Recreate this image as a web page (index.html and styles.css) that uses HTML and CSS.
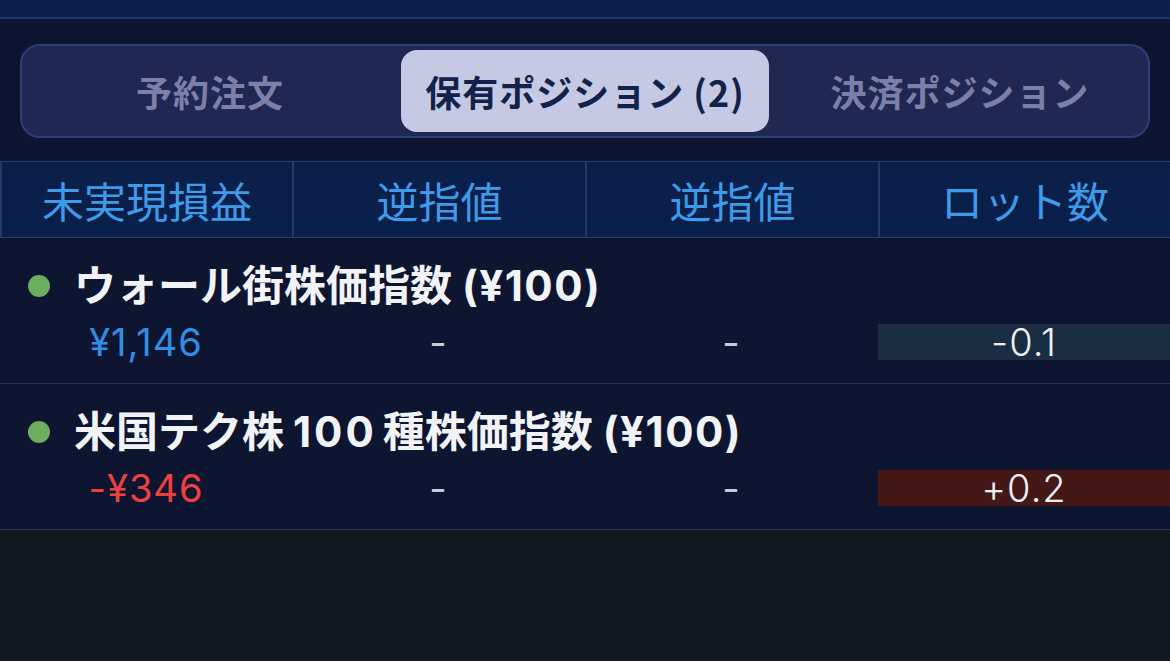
FILE: index.html
```html
<!DOCTYPE html>
<html lang="ja">
<head>
  <meta charset="utf-8">
  <title>保有ポジション</title>
  <link rel="stylesheet" href="styles.css">
</head>
<body>
  <div id="app">
    <div class="topbar"></div>

    <div class="panel">
      <div class="segment">
        <div class="tab">予約注文</div>
        <div class="tab active">保有ポジション (2)</div>
        <div class="tab">決済ポジション</div>
      </div>

      <div class="head-row">
        <div class="head-cell">未実現損益</div>
        <div class="head-cell">逆指値</div>
        <div class="head-cell">逆指値</div>
        <div class="head-cell">ロット数</div>
      </div>

      <div class="position">
        <div class="name-line">
          <span class="dot"></span>
          <span class="name">ウォール街株価指数 <span class="unit">(¥100)</span></span>
        </div>
        <div class="value-line">
          <div class="val pnl up">¥1,146</div>
          <div class="val">-</div>
          <div class="val">-</div>
          <div class="val lots short">-0.1</div>
        </div>
      </div>

      <div class="position">
        <div class="name-line">
          <span class="dot"></span>
          <span class="name">米国テク株<span class="num">100</span>種株価指数 <span class="unit">(¥100)</span></span>
        </div>
        <div class="value-line">
          <div class="val pnl down">-¥346</div>
          <div class="val">-</div>
          <div class="val">-</div>
          <div class="val lots long">+0.2</div>
        </div>
      </div>
    </div>

    <div class="rest"></div>
  </div>
</body>
</html>
```

FILE: styles.css
```css
*, *:before, *:after { box-sizing: border-box; }
html, body { height: 100%; }
body {
  margin: 0;
  padding: 0;
  background-color: #13171e;
  font-family: "Inter", "Noto Sans CJK JP", sans-serif;
  color: #eef0f6;
}
#app { display: flex; flex-direction: column; height: 100%; }

/* top strip */
.topbar {
  height: 19px;
  background-color: #0b1f4b;
  border-bottom: 2px solid #1c3468;
}

.panel { background-color: #0d1530; padding-top: 25px; }

/* segmented tabs */
.segment {
  display: flex;
  margin: 0 20px;
  height: 94px;
  padding: 4px;
  background-color: #1f2752;
  border: 2px solid #2c3f78;
  border-radius: 20px;
}
.tab {
  flex: 1;
  display: flex;
  align-items: center;
  justify-content: center;
  font-family: "Noto Sans CJK JP", sans-serif;
  font-size: 36px;
  font-weight: 700;
  letter-spacing: 1px;
  color: #7a80a8;
}
.tab.active {
  margin: 0 7px;
  background-color: #c5c9e3;
  color: #13224a;
  border-radius: 16px;
}

/* column headings */
.head-row {
  display: grid;
  grid-template-columns: 292px 293px 293px 1fr;
  margin-top: 23px;
  height: 77px;
  background-color: #0b1f4b;
  border-top: 1px solid #2a4072;
  border-bottom: 1px solid #2a4072;
}
.head-cell {
  display: flex;
  align-items: center;
  justify-content: center;
  border-left: 2px solid #253a6a;
  font-family: "Noto Sans CJK JP", sans-serif;
  font-size: 42px;
  color: #3d9be9;
}

/* position rows */
.position {
  padding: 22px 0 23px;
  border-bottom: 1px solid #2a3352;
}
.name-line {
  display: flex;
  align-items: center;
  height: 52px;
  padding-left: 28px;
}
.dot {
  flex-shrink: 0;
  width: 22px;
  height: 22px;
  border-radius: 50%;
  background-color: #6aae5e;
  margin-right: 24px;
}
.name {
  font-size: 42px;
  font-weight: 700;
  line-height: 52px;
  color: #f2f3f8;
}
.name .unit { letter-spacing: 1.5px; }
.name .num { margin: 0 6px 0 9px; letter-spacing: 3px; }
.value-line {
  display: grid;
  grid-template-columns: 292px 293px 293px 1fr;
  margin-top: 12px;
  height: 36px;
}
.val {
  display: flex;
  align-items: center;
  justify-content: center;
  font-size: 38px;
  line-height: 36px;
  letter-spacing: 1px;
  color: #c9cbd6;
}
.pnl.up { color: #2f8fe4; }
.pnl.down { color: #ef4040; }
.lots { color: #eef0f6; font-weight: 300; }
.lots.short { background-color: #1b2d42; }
.lots.long { background-color: #451818; }

.rest { flex: 1; background-color: #13171e; }
```
